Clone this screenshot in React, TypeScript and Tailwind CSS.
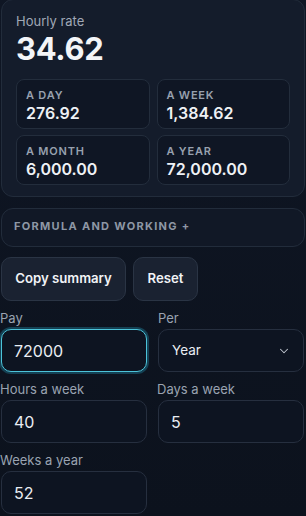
import { ChevronDown } from "lucide-react";

const stats = [
  { label: "A day", value: "276.92" },
  { label: "A week", value: "1,384.62" },
  { label: "A month", value: "6,000.00" },
  { label: "A year", value: "72,000.00" },
];

function Field({ label, value, focused }: { label: string; value: string; focused?: boolean }) {
  return (
    <div className="flex flex-col">
      <label className="text-[13px] leading-[16px] text-[#9aa3b1] h-[16px] -ml-px">{label}</label>
      <div
        className={
          focused
            ? "mt-[3px] h-[43px] rounded-[10px] border border-[#4cc3d9] bg-[#0d1421] px-[12px] flex items-center text-[16px] text-[#e9edf3] shadow-[0_0_0_2px_rgba(34,150,180,0.35)]"
            : "mt-[3px] h-[43px] rounded-[10px] border border-[#262f3f] bg-[#0d1421] px-[12px] flex items-center text-[16px] text-[#e9edf3]"
        }
      >
        {value}
      </div>
    </div>
  );
}

export default function App() {
  return (
    <div
      className="min-h-[516px] w-[306px] bg-gradient-to-b from-[#0f1624] to-[#0c121d] px-px overflow-hidden"
      style={{ fontFamily: "Inter, 'Liberation Sans', sans-serif" }}
    >
      <div className="-mt-px rounded-[12px] border border-[#222c3b] bg-[#141c2b] px-[14px] pt-[12px] pb-[11px]">
        <div className="text-[13px] leading-[18px] text-[#a0a8b6]">Hourly rate</div>
        <div className="mt-[2px] text-[31px] leading-[34px] font-bold text-[#f3f5f8] tracking-[-0.3px]">34.62</div>
        <div className="mt-[13px] grid grid-cols-2 gap-x-[7px] gap-y-[6px]">
          {stats.map((s) => (
            <div key={s.label} className="h-[50px] rounded-[8px] border border-[#232d3c] bg-[#0f1624] px-[9px] pt-[8px]">
              <div className="text-[11px] leading-[14px] font-semibold uppercase tracking-[0.8px] text-[#98a1af]">{s.label}</div>
              <div className="mt-[2px] text-[16px] leading-[18px] font-semibold text-[#eef1f5]">{s.value}</div>
            </div>
          ))}
        </div>
      </div>

      <div className="mt-[11px] h-[39px] rounded-[12px] border border-[#222c3b] bg-[#111826] px-[12px] flex items-center">
        <span className="-mt-[3px] text-[11px] font-bold uppercase tracking-[1.3px] text-[#8e97a5]">Formula and working +</span>
      </div>

      <div className="mt-[10px] flex gap-[7px]">
        <button className="h-[44px] w-[125px] rounded-[10px] border border-[#2a3444] bg-[#1a2231] text-[13.2px] font-semibold text-[#f1f3f6]">
          Copy summary
        </button>
        <button className="h-[44px] w-[65px] rounded-[10px] border border-[#2a3444] bg-[#1a2231] text-[13.2px] font-semibold text-[#f1f3f6]">
          Reset
        </button>
      </div>

      <div className="mt-[9px] grid grid-cols-2 gap-x-[11px] gap-y-[9px] pr-px">
        <Field label="Pay" value="72000" focused />
        <div className="flex flex-col">
          <label className="text-[13px] leading-[16px] text-[#9aa3b1] h-[16px]">Per</label>
          <div className="mt-[3px] h-[43px] rounded-[10px] border border-[#262f3f] bg-[#0d1421] pl-[13px] pr-[12px] flex items-center justify-between text-[13.5px] text-[#e9edf3]">
            <span>Year</span>
            <ChevronDown size={14} strokeWidth={1.75} className="text-[#c3c9d2]" />
          </div>
        </div>
        <Field label="Hours a week" value="40" />
        <Field label="Days a week" value="5" />
        <Field label="Weeks a year" value="52" />
      </div>
    </div>
  );
}
